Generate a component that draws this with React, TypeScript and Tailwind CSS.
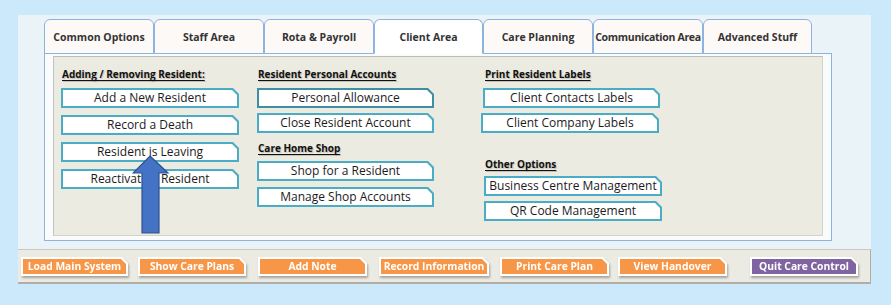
import React from "react";

const TABS = [
  { label: "Common Options", w: "w-[110px]" },
  { label: "Staff Area", w: "w-[110px]" },
  { label: "Rota & Payroll", w: "w-[110px]" },
  { label: "Client Area", w: "w-[109px]", active: true },
  { label: "Care Planning", w: "w-[110px]" },
  { label: "Communication Area", w: "w-[110px] text-[9.6px] tracking-[-0.3px]" },
  { label: "Advanced Stuff", w: "w-[109px]" },
];

const BOTTOM = [
  { label: "Load Main System", cls: "ml-[3px] w-[107px]" },
  { label: "Show Care Plans", cls: "ml-[10px] w-[108px]" },
  { label: "Add Note", cls: "ml-[12px] w-[109px]" },
  { label: "Record Information", cls: "ml-[12px] w-[110px]" },
  { label: "Print Care Plan", cls: "ml-[11px] w-[109px]" },
  { label: "View Handover", cls: "ml-[9px] w-[109px]" },
  { label: "Quit Care Control", cls: "ml-[23px] w-[108px]", purple: true },
];

function Heading({ children, cls = "" }: { children: React.ReactNode; cls?: string }) {
  return (
    <div
      className={`h-[14px] leading-[14px] text-[10px] font-bold underline underline-offset-[2px] whitespace-nowrap text-[#111] [text-shadow:1px_1px_1px_rgba(0,0,0,0.18)] ${cls}`}
    >
      {children}
    </div>
  );
}

function TealButton({ label, cls = "", focus = false }: { label: string; cls?: string; focus?: boolean }) {
  return (
    <div
      className={`h-[20px] p-[2px] ${focus ? "bg-[#3f8fa3]" : "bg-[#4bacc6]"} [clip-path:polygon(0_0,calc(100%_-_6px)_0,100%_6px,100%_100%,0_100%)] ${cls}`}
    >
      <div className="h-full bg-white flex items-center justify-center whitespace-nowrap text-[12px] leading-none text-[#1b1b1b] [clip-path:polygon(0_0,calc(100%_-_5px)_0,100%_5px,100%_100%,0_100%)]">
        {label}
      </div>
    </div>
  );
}

function OrangeButton({ label, cls, purple }: { label: string; cls: string; purple?: boolean }) {
  return (
    <div className={`h-[19px] [filter:drop-shadow(1px_2px_1px_rgba(0,0,0,0.3))] ${cls}`}>
      <div className="h-full p-[2px] bg-white [clip-path:polygon(0_0,calc(100%_-_6px)_0,100%_6px,100%_100%,0_100%)]">
        <div
          className={`h-full flex items-center justify-center whitespace-nowrap text-[10.3px] font-bold text-white leading-none ${purple ? "bg-[#8064a2]" : "bg-[#f79646]"} [clip-path:polygon(0_0,calc(100%_-_5px)_0,100%_5px,100%_100%,0_100%)]`}
        >
          {label}
        </div>
      </div>
    </div>
  );
}

export default function App() {
  return (
    <div className="w-[891px] h-[305px] bg-[#cce9fc] pt-[15px] pl-[18px] font-['Open_Sans',sans-serif] overflow-hidden">
      <div className="w-[853px] h-[234px] bg-[#eaf4f8] pt-[4px] pl-[26px]">
        {/* Tabs */}
        <div className="flex h-[35px] -mb-px relative z-10">
          {TABS.map((t) => (
            <div
              key={t.label}
              className={`h-full pt-[2px] rounded-t-[6px] border border-[#8db3e2] flex items-center justify-center whitespace-nowrap text-[10.5px] font-bold text-[#333] ${t.w} ${
                t.active ? "bg-white border-b-white" : "bg-[#fdf9f6]"
              }`}
            >
              {t.label}
            </div>
          ))}
        </div>

        {/* Frame */}
        <div className="w-[788px] h-[188px] border border-[#8db3e2] bg-[#f9fbfc] pt-[2px] px-[8px] pb-[4px]">
          <div className="relative h-full bg-[#ecebe2] border border-[#d2d1ca] border-t-[#bdbdb8] border-l-[#c4c4bf] flex pl-[7px] pt-[10px]">
            {/* Column 1 */}
            <div className="w-[178px] flex flex-col">
              <Heading cls="ml-[1px]">Adding / Removing Resident:</Heading>
              <TealButton label="Add a New Resident" cls="mt-[7px]" />
              <TealButton label="Record a Death" cls="mt-[7px]" />
              <TealButton label="Resident is Leaving" cls="mt-[7px]" />
              <TealButton label="Reactivate a Resident" cls="mt-[7px]" />
            </div>

            {/* Column 2 */}
            <div className="w-[177px] ml-[18px] flex flex-col">
              <Heading cls="ml-[1px]">Resident Personal Accounts</Heading>
              <TealButton label="Personal Allowance" cls="mt-[7px]" focus />
              <TealButton label="Close Resident Account" cls="mt-[5px]" />
              <Heading cls="mt-[8px] ml-[1px]">Care Home Shop</Heading>
              <TealButton label="Shop for a Resident" cls="mt-[6px]" />
              <TealButton label="Manage Shop Accounts" cls="mt-[6px]" />
            </div>

            {/* Column 3 */}
            <div className="w-[182px] ml-[47px] flex flex-col">
              <Heading cls="ml-[4px]">Print Resident Labels</Heading>
              <TealButton label="Client Contacts Labels" cls="mt-[7px] ml-[2px] w-[177px]" />
              <TealButton label="Client Company Labels" cls="mt-[5px] w-[178px]" />
              <Heading cls="mt-[24px] ml-[4px]">Other Options</Heading>
              <TealButton label="Business Centre Management" cls="mt-[5px] ml-[3px] w-[178px]" />
              <TealButton label="QR Code Management" cls="mt-[5px] ml-[3px] w-[178px]" />
            </div>

            {/* Pointer arrow */}
            <svg
              className="absolute left-[78px] top-[98px]"
              width="38"
              height="80"
              viewBox="0 0 38 80"
            >
              <polygon
                points="18,1 36,18 27,18 27,78 10,78 10,18 1,18"
                fill="#4472c4"
                stroke="#2f528f"
                strokeWidth="1.2"
              />
            </svg>
          </div>
        </div>
      </div>

      {/* Bottom bar */}
      <div className="w-[853px] h-[35px] bg-[#ecebe3] border-t border-t-[#c9c8c1] border-b-2 border-r border-[#b0aea6] flex pt-[7px]">
        {BOTTOM.map((b) => (
          <OrangeButton key={b.label} label={b.label} cls={b.cls} purple={b.purple} />
        ))}
      </div>
    </div>
  );
}
